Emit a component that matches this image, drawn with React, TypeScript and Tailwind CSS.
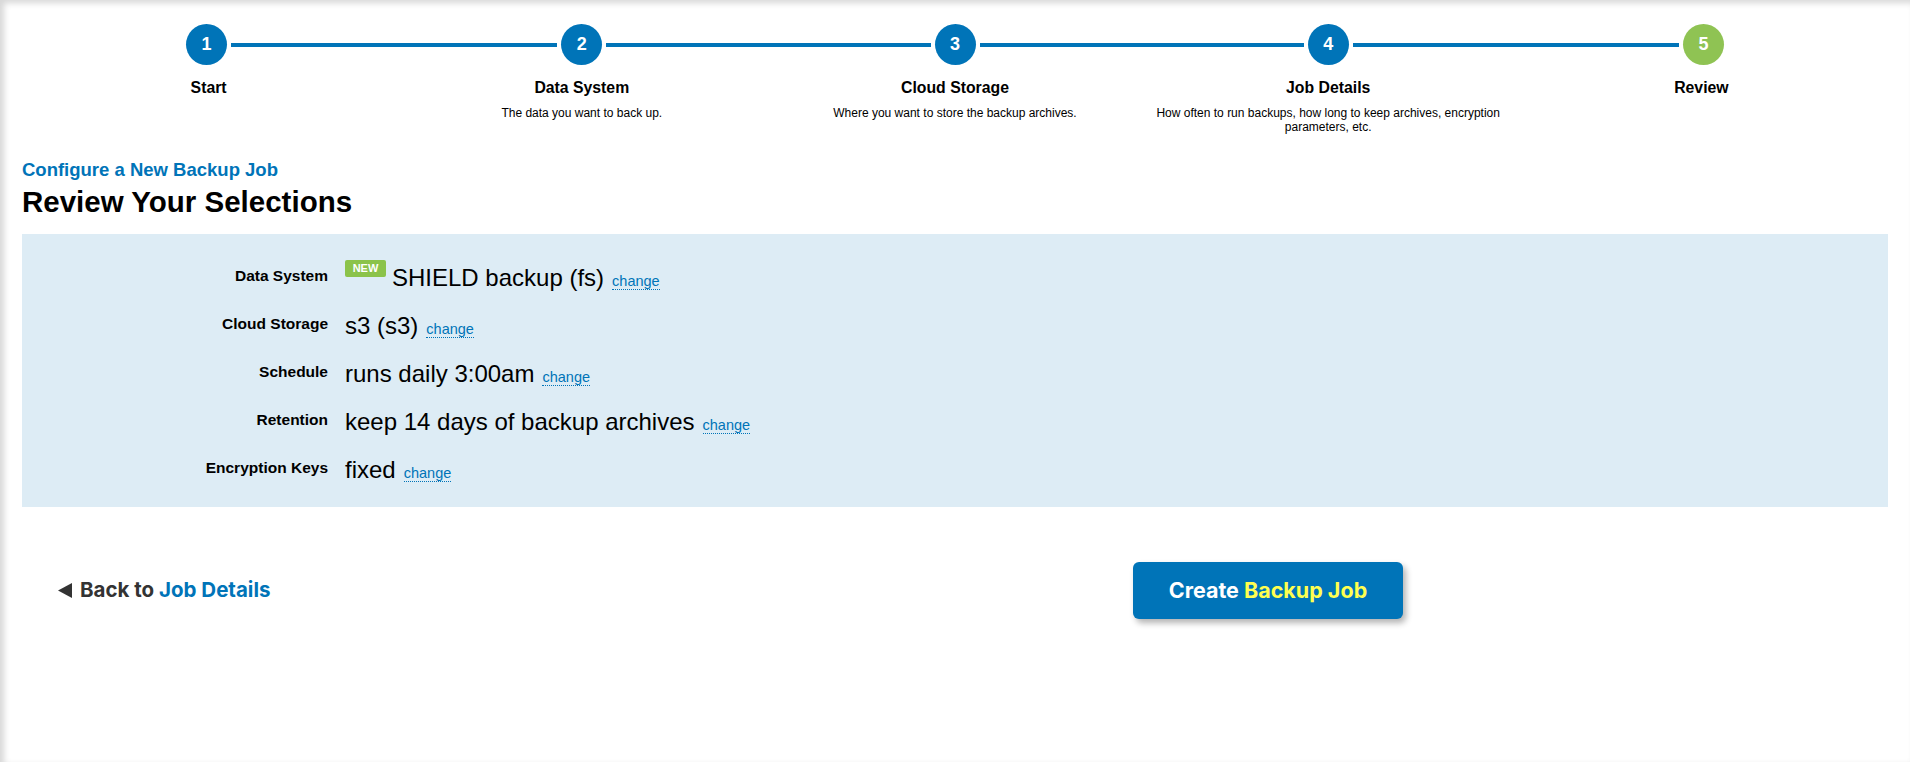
const steps = [
  { n: 1, title: "Start", desc: "" },
  { n: 2, title: "Data System", desc: "The data you want to back up." },
  { n: 3, title: "Cloud Storage", desc: "Where you want to store the backup archives." },
  {
    n: 4,
    title: "Job Details",
    desc: "How often to run backups, how long to keep archives, encryption parameters, etc.",
  },
  { n: 5, title: "Review", desc: "" },
];

const rows = [
  { label: "Data System", value: "SHIELD backup (fs)", isNew: true },
  { label: "Cloud Storage", value: "s3 (s3)" },
  { label: "Schedule", value: "runs daily 3:00am" },
  { label: "Retention", value: "keep 14 days of backup archives" },
  { label: "Encryption Keys", value: "fixed" },
];

function Step({ n, title, desc }: { n: number; title: string; desc: string }) {
  const current = n === 5;
  return (
    <div className="flex flex-col items-center">
      <div className="flex w-full items-center">
        <div className={n === 1 ? "flex-1" : "flex-1 h-[4px] bg-[#0074b8] mr-[4px]"} />
        <div
          className={
            current
              ? "flex h-[41px] w-[41px] items-center justify-center rounded-full bg-[#8fc353] text-[18px] font-bold text-white"
              : "flex h-[41px] w-[41px] items-center justify-center rounded-full bg-[#0074b8] text-[18px] font-bold text-white"
          }
        >
          {n}
        </div>
        <div className={n === 5 ? "flex-1" : "flex-1 h-[4px] bg-[#0074b8] ml-[4px]"} />
      </div>
      <div className="mt-[15px] text-[15.8px] font-bold leading-[16px] text-black">{title}</div>
      {desc && (
        <p className="mt-[10px] max-w-[350px] text-center text-[12px] leading-[14px] text-black">
          {desc}
        </p>
      )}
    </div>
  );
}

export default function App() {
  return (
    <div className="min-h-[762px] w-full bg-white font-['Liberation_Sans',Arial,sans-serif] shadow-[inset_4px_3px_6px_rgba(0,0,0,0.16)]">
      <div className="px-[22px]">
        <div className="grid grid-cols-5 pt-[24px] h-[160px]">
          {steps.map((s) => (
            <Step key={s.n} {...s} />
          ))}
        </div>

        <div className="text-[18.5px] font-bold leading-[20px] text-[#0074b8]">
          Configure a New Backup Job
        </div>
        <h1 className="mt-[6px] text-[29.5px] font-bold leading-[32px] text-black">
          Review Your Selections
        </h1>

        <div className="mt-[16px] flex flex-col gap-[20px] bg-[#ddecf5] pt-[30px] pb-[23px]">
          {rows.map((r) => (
            <div key={r.label} className="flex h-[28px] items-start">
              <div className="w-[306px] pt-[2px] text-right text-[15.5px] font-bold leading-[20px] text-black">
                {r.label}
              </div>
              <div className="ml-[17px] h-[28px] whitespace-nowrap text-[24px] leading-[28px] text-black">
                {r.isNew && (
                  <span className="relative -top-[4px] mr-[6px] inline-block h-[17px] w-[41px] rounded-[2px] bg-[#8bc34a] align-top text-center text-[11px] font-bold leading-[17px] text-white">
                    NEW
                  </span>
                )}
                {r.value}
                <a
                  href="#"
                  className="ml-[8px] border-b border-dotted border-[#0074b8] text-[14.5px] leading-none text-[#0074b8]"
                >
                  change
                </a>
              </div>
            </div>
          ))}
        </div>

        <div className="mt-[55px] grid grid-cols-[1111px_auto] items-center">
          <a href="#" className="flex items-center pl-[36px] font-['Inter',sans-serif] text-[20.5px] font-bold text-[#333]">
            <svg width="14" height="15" viewBox="0 0 14 15" className="mr-[8px]">
              <polygon points="14,0 14,15 0,7.5" fill="#333" />
            </svg>
            Back to&nbsp;<span className="text-[#0074b8]">Job Details</span>
          </a>
          <button className="h-[57px] w-[270px] rounded-[6px] bg-[#0074b8] font-['Inter',sans-serif] text-[21.5px] font-bold text-white shadow-[3px_4px_6px_rgba(0,0,0,0.3)]">
            Create <span className="text-[#ffff50]">Backup Job</span>
          </button>
        </div>
      </div>
    </div>
  );
}
